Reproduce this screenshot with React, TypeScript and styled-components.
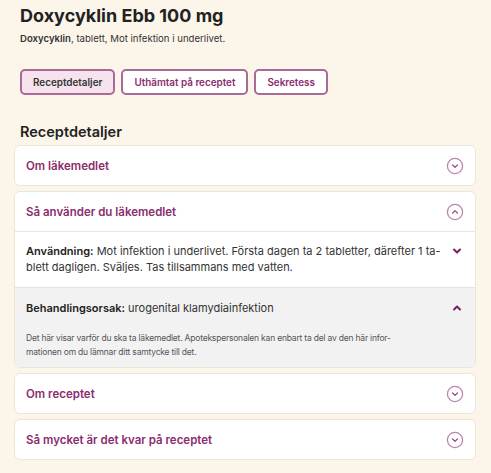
import React from "react";
import styled, { createGlobalStyle } from "styled-components";

const Global = createGlobalStyle`
  html, body { margin: 0; padding: 0; background: #fcf6ea; }
  body { font-family: Inter, "Noto Sans", sans-serif; color: #222; }
`;

const Page = styled.div`
  padding: 4px 15px 14px 14px;
  display: flex;
  flex-direction: column;
`;

const Title = styled.h1`
  margin: 0 0 0 6px;
  font-size: 18px;
  line-height: 24px;
  font-weight: 700;
  color: #222;
`;

const Subtitle = styled.p`
  margin: 4px 0 0 6px;
  font-size: 9.6px;
  line-height: 14px;
  color: #333;
  b { font-weight: 600; }
`;

const Tabs = styled.div`
  display: flex;
  gap: 6px;
  margin: 23px 0 0 6px;
`;

const Tab = styled.button<{ $active?: boolean }>`
  height: 26px;
  padding: 0 11px;
  border: 2px solid #a86a96;
  border-radius: 5px;
  background: ${(p) => (p.$active ? "#f6e3ee" : "#fff")};
  color: ${(p) => (p.$active ? "#333" : "#8a2d6e")};
  font-family: Inter, sans-serif;
  font-size: 9.9px;
  font-weight: 600;
`;

const Heading = styled.h2`
  margin: 28px 0 0 6px;
  font-size: 14.5px;
  line-height: 18px;
  font-weight: 600;
  color: #222;
`;

const List = styled.div`
  display: flex;
  flex-direction: column;
  gap: 5px;
  margin-top: 4px;
`;

const Card = styled.div`
  background: #fff;
  border: 1.5px solid #ede5d8;
  border-radius: 6px;
  overflow: hidden;
`;

const CardHeader = styled.div<{ $divider?: boolean }>`
  height: 39px;
  display: flex;
  align-items: center;
  justify-content: space-between;
  padding: 0 11px 0 11px;
  border-bottom: ${(p) => (p.$divider ? "1.5px solid #e6e6e6" : "none")};
`;

const CardTitle = styled.span`
  color: #8a2d6e;
  font-size: 11.5px;
  font-weight: 600;
`;

const Section = styled.div<{ $gray?: boolean }>`
  background: ${(p) => (p.$gray ? "#f2f2f2" : "#fff")};
  padding: ${(p) => (p.$gray ? "12px 12px 8px 11px" : "11px 12px 12px 11px")};
  display: flex;
  flex-direction: column;
  border-top: ${(p) => (p.$gray ? "1.5px solid #e4e4e4" : "none")};
`;

const SectionRow = styled.div`
  display: flex;
  align-items: flex-start;
  justify-content: space-between;
  gap: 10px;
`;

const SectionText = styled.p`
  margin: 0;
  font-size: 11px;
  line-height: 16px;
  color: #333;
  b { font-weight: 600; color: #222; }
`;

const Note = styled.p`
  margin: 15px 0 0 0;
  font-size: 8.5px;
  letter-spacing: -0.2px;
  line-height: 14px;
  color: #555;
  white-space: nowrap;
`;

const SmallChevron = styled.svg`
  flex: none;
  width: 12px;
  height: 12px;
  margin-top: 2px;
`;

const CircleIcon = styled.svg`
  width: 18px;
  height: 18px;
  flex: none;
`;

const Chevron = ({ up }: { up?: boolean }) => (
  <SmallChevron viewBox="0 0 12 12">
    <path
      d={up ? "M3 7.5 L6 4.5 L9 7.5" : "M3 4.5 L6 7.5 L9 4.5"}
      fill="none"
      stroke="#7a1f5e"
      strokeWidth="2"
      strokeLinecap="round"
      strokeLinejoin="round"
    />
  </SmallChevron>
);

const Circle = ({ up }: { up?: boolean }) => (
  <CircleIcon viewBox="0 0 18 18">
    <circle cx="9" cy="9" r="7.6" fill="none" stroke="#bb85ad" strokeWidth="1.3" />
    <path
      d={up ? "M6.6 10 L9 7.6 L11.4 10" : "M6.6 8 L9 10.4 L11.4 8"}
      fill="none"
      stroke="#9a4f85"
      strokeWidth="1.3"
      strokeLinecap="round"
      strokeLinejoin="round"
    />
  </CircleIcon>
);

export default function App() {
  return (
    <>
      <Global />
      <Page>
        <Title>Doxycyklin Ebb 100 mg</Title>
        <Subtitle>
          <b>Doxycyklin</b>, tablett, Mot infektion i underlivet.
        </Subtitle>
        <Tabs>
          <Tab $active>Receptdetaljer</Tab>
          <Tab>Uthämtat på receptet</Tab>
          <Tab>Sekretess</Tab>
        </Tabs>
        <Heading>Receptdetaljer</Heading>
        <List>
          <Card>
            <CardHeader>
              <CardTitle>Om läkemedlet</CardTitle>
              <Circle />
            </CardHeader>
          </Card>
          <Card>
            <CardHeader $divider>
              <CardTitle>Så använder du läkemedlet</CardTitle>
              <Circle up />
            </CardHeader>
            <Section>
              <SectionRow>
                <SectionText>
                  <b>Användning:</b> Mot infektion i underlivet. Första dagen ta 2 tabletter, därefter 1 ta-
                  <br />
                  blett dagligen. Sväljes. Tas tillsammans med vatten.
                </SectionText>
                <Chevron />
              </SectionRow>
            </Section>
            <Section $gray>
              <SectionRow>
                <SectionText>
                  <b>Behandlingsorsak:</b> urogenital klamydiainfektion
                </SectionText>
                <Chevron up />
              </SectionRow>
              <Note>
                Det här visar varför du ska ta läkemedlet. Apotekspersonalen kan enbart ta del av den här infor-
                <br />
                mationen om du lämnar ditt samtycke till det.
              </Note>
            </Section>
          </Card>
          <Card>
            <CardHeader>
              <CardTitle>Om receptet</CardTitle>
              <Circle />
            </CardHeader>
          </Card>
          <Card>
            <CardHeader>
              <CardTitle>Så mycket är det kvar på receptet</CardTitle>
              <Circle />
            </CardHeader>
          </Card>
        </List>
      </Page>
    </>
  );
}
